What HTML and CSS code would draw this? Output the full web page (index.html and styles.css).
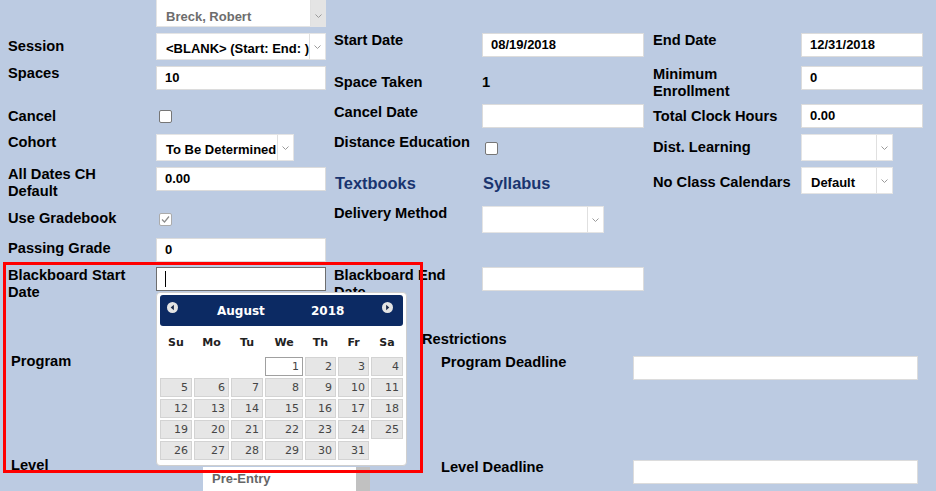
FILE: index.html
```html
<!DOCTYPE html>
<html>
<head>
<meta charset="utf-8">
<title>Section</title>
<link rel="stylesheet" href="styles.css">
</head>
<body>
<div class="page">
  <div class="form">
    <div class="sel sel-dis w-a c2"><span class="sel-txt">Breck, Robert</span><span class="sel-arr"><svg width="7" height="4" viewBox="0 0 7 4"><path d="M0.5 0.5 L3.5 3.5 L6.5 0.5" fill="none" stroke="#9a9a9a" stroke-width="1"/></svg></span></div>

    <div class="lbl c1 o6">Session</div>
    <div class="sel w-a o1"><span class="sel-txt">&lt;BLANK&gt; (Start: End: )</span><span class="sel-arr"><svg width="7" height="4" viewBox="0 0 7 4"><path d="M0.5 0.5 L3.5 3.5 L6.5 0.5" fill="none" stroke="#9a9a9a" stroke-width="1"/></svg></span></div>
    <div class="lbl">Start Date</div>
    <div class="inp w-b o1">08/19/2018</div>
    <div class="lbl">End Date</div>
    <div class="inp w-c o1">12/31/2018</div>

    <div class="lbl c1 o3">Spaces</div>
    <div class="inp w-a o4">10</div>
    <div class="lbl o12">Space Taken</div>
    <div class="lbl o12">1</div>
    <div class="lbl o4">Minimum Enrollment</div>
    <div class="inp w-c o4">0</div>

    <div class="lbl c1 o8">Cancel</div>
    <div class="cb o10"></div>
    <div class="lbl o4">Cancel Date</div>
    <div class="inp w-b o4"></div>
    <div class="lbl o8">Total Clock Hours</div>
    <div class="inp w-c o4">0.00</div>

    <div class="lbl c1 o3">Cohort</div>
    <div class="sel w-d o3"><span class="sel-txt">To Be Determined</span><span class="sel-arr"><svg width="7" height="4" viewBox="0 0 7 4"><path d="M0.5 0.5 L3.5 3.5 L6.5 0.5" fill="none" stroke="#9a9a9a" stroke-width="1"/></svg></span></div>
    <div class="lbl o3">Distance Education</div>
    <div class="cb o11"></div>
    <div class="lbl o8">Dist. Learning</div>
    <div class="sel w-e o3"><span class="sel-txt"></span><span class="sel-arr"><svg width="7" height="4" viewBox="0 0 7 4"><path d="M0.5 0.5 L3.5 3.5 L6.5 0.5" fill="none" stroke="#9a9a9a" stroke-width="1"/></svg></span></div>

    <div class="lbl c1 o2">All Dates CH Default</div>
    <div class="inp w-a o3">0.00</div>
    <div class="link o10">Textbooks</div>
    <div class="link o10">Syllabus</div>
    <div class="lbl o10">No Class Calendars</div>
    <div class="sel w-e o3"><span class="sel-txt">Default</span><span class="sel-arr"><svg width="7" height="4" viewBox="0 0 7 4"><path d="M0.5 0.5 L3.5 3.5 L6.5 0.5" fill="none" stroke="#9a9a9a" stroke-width="1"/></svg></span></div>

    <div class="lbl c1 o7">Use Gradebook</div>
    <div class="cb cb-on o10"><svg width="11" height="11" viewBox="0 0 11 11"><path d="M2 5.5 L4.5 8 L9 2.5" fill="none" stroke="#8c8c8c" stroke-width="1.2"/></svg></div>
    <div class="lbl o2">Delivery Method</div>
    <div class="sel w-f o3"><span class="sel-txt"></span><span class="sel-arr"><svg width="7" height="4" viewBox="0 0 7 4"><path d="M0.5 0.5 L3.5 3.5 L6.5 0.5" fill="none" stroke="#9a9a9a" stroke-width="1"/></svg></span></div>

    <div class="lbl c1 o5">Passing Grade</div>
    <div class="inp w-a o3">0</div>

    <div class="lbl c1 o3">Blackboard Start Date</div>
    <div class="inp inp-focus w-a o3"><span class="caret"></span></div>
    <div class="lbl o3">Blackboard End Date</div>
    <div class="inp w-b o3"></div>
  </div>

  <div class="lower">
    <div class="lbl restr">Restrictions</div>
    <div class="lower-grid">
      <div class="lbl">Program</div>
      <div></div>
      <div class="lbl o1">Program Deadline</div>
      <div class="inp w-g o3"></div>

      <div class="lbl">Level</div>
      <div class="listbox o10"><span class="list-item">Pre-Entry</span><span class="list-scroll"></span></div>
      <div class="lbl o2">Level Deadline</div>
      <div class="inp w-g o3"></div>
    </div>
  </div>

  <div class="cal">
    <div class="cal-head">
      <svg class="cal-prev" width="11" height="11" viewBox="0 0 11 11"><circle cx="5.5" cy="5.5" r="5.5" fill="#e4e4e4"/><path d="M6.9 2.7 L3.7 5.5 L6.9 8.3 Z" fill="#1b2a4a"/></svg>
      <span class="cal-month">August</span>
      <span class="cal-year">2018</span>
      <svg class="cal-next" width="11" height="11" viewBox="0 0 11 11"><circle cx="5.5" cy="5.5" r="5.5" fill="#e4e4e4"/><path d="M4.1 2.7 L7.3 5.5 L4.1 8.3 Z" fill="#1b2a4a"/></svg>
    </div>
    <div class="cal-grid cal-dow">
      <span>Su</span><span>Mo</span><span>Tu</span><span>We</span><span>Th</span><span>Fr</span><span>Sa</span>
    </div>
    <div class="cal-grid cal-days">
      <span class="d-empty"></span><span class="d-empty"></span><span class="d-empty"></span>
      <span class="d d-today">1</span><span class="d">2</span><span class="d">3</span><span class="d">4</span>
      <span class="d">5</span><span class="d">6</span><span class="d">7</span><span class="d">8</span><span class="d">9</span><span class="d">10</span><span class="d">11</span>
      <span class="d">12</span><span class="d">13</span><span class="d">14</span><span class="d">15</span><span class="d">16</span><span class="d">17</span><span class="d">18</span>
      <span class="d">19</span><span class="d">20</span><span class="d">21</span><span class="d">22</span><span class="d">23</span><span class="d">24</span><span class="d">25</span>
      <span class="d">26</span><span class="d">27</span><span class="d">28</span><span class="d">29</span><span class="d">30</span><span class="d">31</span><span class="d-empty"></span>
    </div>
  </div>

  <div class="highlight"></div>
</div>
</body>
</html>
```

FILE: styles.css
```css
html, body {
  margin: 0;
  padding: 0;
  background: #bccbe2;
}

.page {
  position: relative;
  width: 936px;
  height: 491px;
  overflow: hidden;
  font-family: "Liberation Sans", Arial, sans-serif;
  color: #000;
}

.form {
  display: grid;
  padding-left: 8px;
  grid-template-columns: 148px 178px 148px 171px 148px 1fr;
  grid-template-rows: 32px 30px 38px 31px 33px 39px 32px 29px 36px;
  align-items: start;
}

.c1 { grid-column: 1; }
.c2 { grid-column: 2; }

.o1 { margin-top: 1px; }
.o2 { margin-top: 2px; }
.o3 { margin-top: 3px; }
.o4 { margin-top: 4px; }
.o5 { margin-top: 5px; }
.o6 { margin-top: 6px; }
.o7 { margin-top: 7px; }
.o8 { margin-top: 8px; }
.o10 { margin-top: 10px; }
.o11 { margin-top: 11px; }
.o12 { margin-top: 12px; }

.lbl {
  font-weight: bold;
  font-size: 14.67px;
  line-height: 17px;
  max-width: 140px;
}

.link {
  font-weight: bold;
  font-size: 16.4px;
  line-height: 18px;
  color: #19346f;
  margin-left: 1px;
}

.inp {
  box-sizing: border-box;
  height: 24px;
  background: #fff;
  border: 1px solid #dcdcdc;
  padding: 0 8px;
  font-size: 13px;
  font-weight: bold;
  line-height: 22px;
  position: relative;
}

.inp-focus {
  border-color: #6e6e6e;
}

.caret {
  position: absolute;
  left: 8px;
  top: 3px;
  width: 1px;
  height: 16px;
  background: #000;
}

.w-a { width: 170px; }
.w-b { width: 162px; }
.w-c { width: 122px; }
.w-d { width: 138px; }
.w-e { width: 92px; }
.w-f { width: 122px; }
.w-g { width: 285px; }

.sel {
  box-sizing: border-box;
  height: 27px;
  background: #fff;
  border: 1px solid #e4e4e4;
  display: flex;
  font-size: 13px;
  font-weight: bold;
}

.sel-txt {
  flex: 1;
  padding: 4px 0 0 9px;
  line-height: 21px;
  white-space: nowrap;
  overflow: hidden;
}

.sel-arr {
  width: 15px;
  border-left: 1px solid #e0e0e0;
  display: flex;
  align-items: center;
  justify-content: center;
}

.sel-dis {
  border-top: none;
  height: 27px;
}

.sel-dis .sel-txt {
  color: #6d6d6d;
  padding-top: 5.5px;
}

.sel-dis .sel-arr {
  background: #e4e4e4;
  width: 14px;
  padding-top: 6px;
}

.cb {
  box-sizing: border-box;
  width: 13px;
  height: 13px;
  margin-left: 3px;
  background: #fff;
  border: 1px solid #767676;
  border-radius: 2px;
}

.cb-on {
  border-color: #ababab;
  display: flex;
  align-items: center;
  justify-content: center;
}

.lower {
  display: flex;
  flex-direction: column;
}

.restr {
  margin: 31px 0 0 422px;
  max-width: none;
}

.lower-grid {
  display: grid;
  margin-top: 5px;
  padding-left: 11px;
  grid-template-columns: 192px 238px 192px 285px;
  grid-template-rows: 103.5px auto;
  align-items: start;
}

.listbox {
  display: flex;
  width: 167px;
  height: 40px;
  background: #fff;
}

.list-item {
  flex: 1;
  padding: 4px 9px;
  font-size: 13px;
  font-weight: bold;
  line-height: 16px;
  color: #666;
}

.list-scroll {
  width: 14px;
  background: #c1c1c1;
}

/* Datepicker popup */
.cal {
  position: absolute;
  left: 156px;
  top: 292px;
  width: 251px;
  box-sizing: border-box;
  padding: 2px 3px 5px;
  background: #fff;
  border: 1px solid #cfcfcf;
  border-radius: 4px;
  font-family: "DejaVu Sans", Verdana, sans-serif;
}

.cal-head {
  display: flex;
  align-items: flex-start;
  height: 31px;
  background: #0c2a63;
  border-radius: 3px;
  color: #fff;
  font-weight: bold;
  font-size: 12px;
  line-height: 14px;
}

.cal-prev {
  margin: 7px 0 0 7px;
  flex: none;
}

.cal-month {
  margin: 9px 0 0 39px;
  width: 94px;
}

.cal-year {
  margin-top: 9px;
  width: 71px;
}

.cal-next {
  margin-top: 7px;
  flex: none;
}

.cal-grid {
  display: grid;
  grid-template-columns: 32px 35px 32px 38px 31px 31px 32px;
  column-gap: 2px;
}

.cal-dow {
  margin-top: 9.5px;
  font-weight: bold;
  font-size: 11px;
  line-height: 13px;
  text-align: center;
  color: #222;
}

.cal-days {
  margin-top: 8.5px;
  row-gap: 2px;
}

.d {
  box-sizing: border-box;
  height: 19px;
  background: #e6e6e6;
  border: 1px solid #d3d3d3;
  color: #454545;
  font-size: 11px;
  line-height: 17px;
  text-align: right;
  padding-right: 3px;
}

.d-today {
  background: #fff;
  border-color: #a0a0a0;
}

.d-empty {
  height: 19px;
}

.highlight {
  position: absolute;
  left: 3px;
  top: 262px;
  width: 420px;
  height: 211px;
  box-sizing: border-box;
  border: 3px solid #ff0000;
  pointer-events: none;
}
```
